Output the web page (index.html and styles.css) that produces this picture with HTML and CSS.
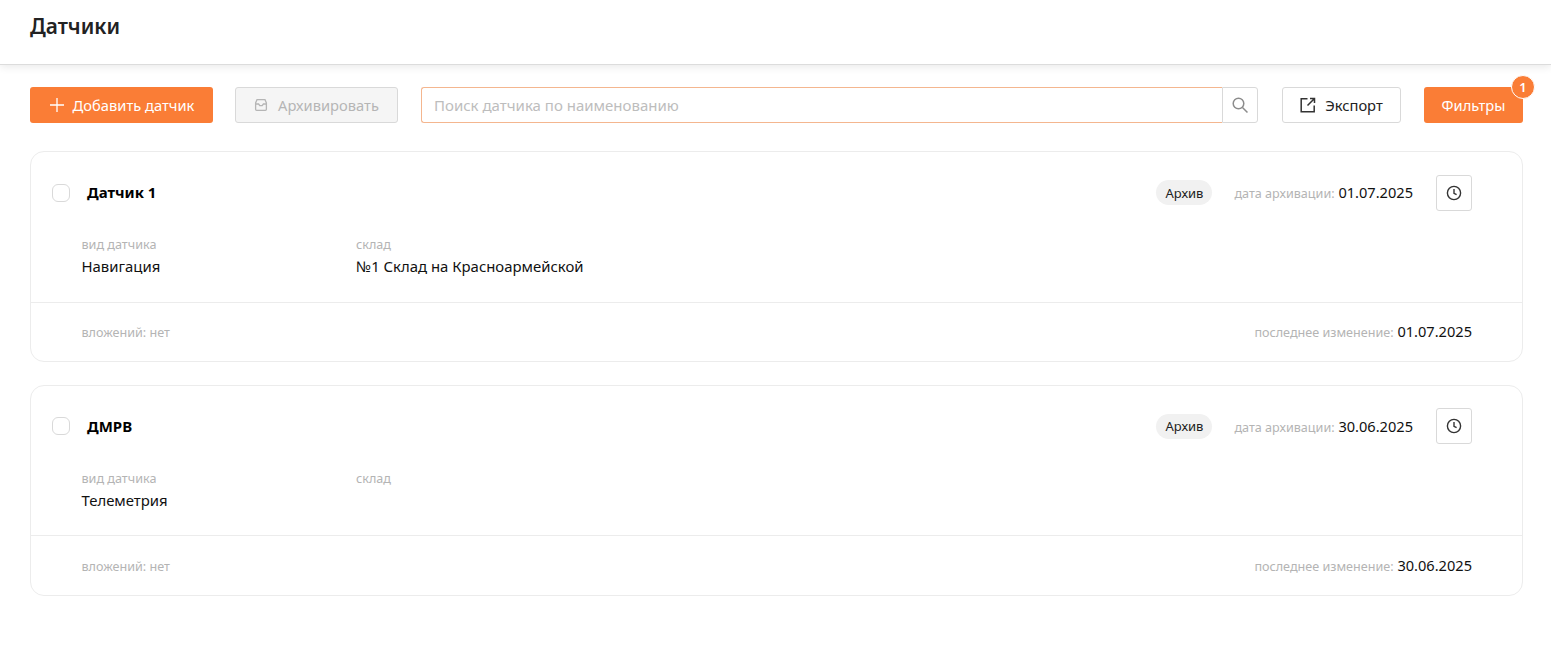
FILE: index.html
```html
<!DOCTYPE html>
<html lang="ru">
<head>
<meta charset="utf-8">
<title>Датчики</title>
<link rel="stylesheet" href="styles.css">
</head>
<body>
<header class="topbar"><h1 class="page-title">Датчики</h1></header>
<main class="content">
  <div class="toolbar">
    <button class="btn btn-primary btn-add">
      <svg class="ic" width="16" height="16" viewBox="0 0 16 16" fill="none" stroke="currentColor" stroke-width="1.3"><path d="M8 1v14M1 8h14"/></svg>
      Добавить датчик
    </button>
    <button class="btn btn-disabled btn-archive">
      <svg class="ic" width="14" height="14" viewBox="0 0 14 14" fill="none" stroke="currentColor" stroke-width="1.3"><path d="M3 1.7h8l1.4 3.3v6.3a1 1 0 0 1-1 1H2.6a1 1 0 0 1-1-1V5z"/><path d="M1.6 6h3l1.2 1.6h2.4L9.4 6h3"/></svg>
      Архивировать
    </button>
    <div class="search">
      <input class="search-input" type="text" placeholder="Поиск датчика по наименованию">
      <span class="search-btn">
        <svg width="18" height="18" viewBox="0 0 18 18" fill="none" stroke="#8c8c8c" stroke-width="1.5"><circle cx="7.5" cy="7.5" r="5.3"/><path d="M11.5 11.5l5 5"/></svg>
      </span>
    </div>
    <button class="btn btn-default btn-export">
      <svg class="ic" width="16" height="16" viewBox="0 0 16 16" fill="none" stroke="#333" stroke-width="1.5"><path d="M7.5 1.8H1.2v13h13V8.5"/><path d="M7.5 8.5L14 2M10 1.5h4.5V6"/></svg>
      Экспорт
    </button>
    <div class="filter-wrap">
      <button class="btn btn-primary btn-filter">Фильтры</button>
      <span class="badge">1</span>
    </div>
  </div>

  <section class="card">
    <div class="card-body">
      <div class="card-head">
        <span class="check"></span>
        <span class="card-title">Датчик 1</span>
        <span class="pill">Архив</span>
        <span class="meta"><span class="muted">дата архивации:</span> 01.07.2025</span>
        <span class="icon-btn">
          <svg width="16" height="16" viewBox="0 0 16 16" fill="none" stroke="#333" stroke-width="1.4"><circle cx="8" cy="8" r="6.6"/><path d="M8 4v4.3l2.6 1.4"/></svg>
        </span>
      </div>
      <div class="fields">
        <div class="field field-type"><div class="muted">вид датчика</div><div class="value">Навигация</div></div>
        <div class="field"><div class="muted">склад</div><div class="value">№1 Склад на Красноармейской</div></div>
      </div>
    </div>
    <div class="card-foot">
      <span class="muted">вложений: нет</span>
      <span class="meta"><span class="muted">последнее изменение:</span> 01.07.2025</span>
    </div>
  </section>

  <section class="card">
    <div class="card-body">
      <div class="card-head">
        <span class="check"></span>
        <span class="card-title">ДМРВ</span>
        <span class="pill">Архив</span>
        <span class="meta"><span class="muted">дата архивации:</span> 30.06.2025</span>
        <span class="icon-btn">
          <svg width="16" height="16" viewBox="0 0 16 16" fill="none" stroke="#333" stroke-width="1.4"><circle cx="8" cy="8" r="6.6"/><path d="M8 4v4.3l2.6 1.4"/></svg>
        </span>
      </div>
      <div class="fields">
        <div class="field field-type"><div class="muted">вид датчика</div><div class="value">Телеметрия</div></div>
        <div class="field"><div class="muted">склад</div><div class="value"></div></div>
      </div>
    </div>
    <div class="card-foot">
      <span class="muted">вложений: нет</span>
      <span class="meta"><span class="muted">последнее изменение:</span> 30.06.2025</span>
    </div>
  </section>
</main>
</body>
</html>
```
FILE: styles.css
```css
* { box-sizing: border-box; }
html, body { margin: 0; padding: 0; }
body {
  background: #fff;
  font-family: "Noto Sans", "Open Sans", sans-serif;
  color: #111;
  font-size: 14px;
  overflow: hidden;
}
.topbar {
  height: 65px;
  padding: 11px 30px 0;
  border-bottom: 1px solid #dcdcdc;
  box-shadow: 0 2px 8px rgba(0, 0, 0, .09);
}
.page-title {
  margin: 0;
  font-size: 20.8px;
  line-height: 30px;
  font-weight: 600;
  color: #222;
}
.content { padding: 22px 28px 0 30px; }
.toolbar { display: flex; align-items: stretch; height: 36px; }
.btn {
  display: inline-flex;
  align-items: center;
  justify-content: center;
  height: 36px;
  border-radius: 3px;
  border: 1px solid transparent;
  font: inherit;
  font-size: 14.7px;
  padding: 0;
}
.btn-primary { background: #fa7d36; color: #fff; }
.btn-disabled { background: #f5f5f5; border-color: #d9d9d9; color: #b5b5b5; }
.btn-default { background: #fff; border-color: #d9d9d9; color: #222; }
.btn-add { width: 183px; gap: 8px; }
.btn-archive { width: 163px; margin-left: 22px; gap: 10px; }
.btn-export { width: 119px; margin-left: 24px; gap: 9px; }
.btn-filter { width: 99px; }
.search { display: flex; width: 837px; margin-left: 23px; }
.search-input {
  flex: 1;
  min-width: 0;
  height: 36px;
  border: 1px solid #f4b68f;
  border-right: 0;
  border-radius: 3px 0 0 3px;
  padding: 0 12px;
  font: inherit;
  font-size: 15px;
  outline: none;
  color: #222;
}
.search-input::placeholder { color: #bdbdbd; opacity: 1; }
.search-btn {
  width: 36px;
  display: flex;
  align-items: center;
  justify-content: center;
  border: 1px solid #d9d9d9;
  border-radius: 0 3px 3px 0;
}
.filter-wrap { position: relative; margin-left: 23px; }
.badge {
  position: absolute;
  top: -12px;
  right: -12px;
  width: 24px;
  height: 24px;
  border-radius: 50%;
  border: 1px solid #fff;
  background: #fa7d36;
  color: #fff;
  font-size: 13px;
  font-weight: 600;
  display: flex;
  align-items: center;
  justify-content: center;
}
.card {
  margin-top: 28px;
  height: 210.9px;
  border: 1px solid #ececec;
  border-radius: 14px;
  display: flex;
  flex-direction: column;
}
.card + .card { margin-top: 22.8px; }
.card-body { height: 150.7px; padding: 22.6px 50px 0 21px; border-bottom: 1px solid #ececec; }
.card-head { display: flex; align-items: center; height: 36px; }
.check {
  width: 18px;
  height: 18px;
  border: 1px solid #d9d9d9;
  border-radius: 6px;
}
.card-title {
  margin-left: 17px;
  margin-bottom: 0.6px;
  font-weight: 700;
  font-size: 15px;
  color: #000;
  margin-right: auto;
}
.pill {
  background: #f1f1f1;
  border-radius: 13px;
  height: 25px;
  width: 56px;
  display: flex;
  align-items: center;
  justify-content: center;
  font-size: 13px;
  color: #222;
}
.meta { font-size: 14.6px; color: #111; }
.card-head .meta { margin-left: 22px; margin-bottom: 0.6px; }
.muted { color: #b4b4b4; font-size: 12.6px; line-height: 17px; }
.icon-btn {
  width: 36px;
  height: 36px;
  margin-left: 23px;
  border: 1px solid #d9d9d9;
  border-radius: 3px;
  display: flex;
  align-items: center;
  justify-content: center;
}
.fields { display: flex; margin-top: 25.5px; padding-left: 29.5px; }
.field-type { width: 274.5px; }
.value { font-size: 14.9px; line-height: 20px; margin-top: 3px; color: #111; }
.card-foot {
  flex: 1;
  display: flex;
  align-items: baseline;
  justify-content: space-between;
  padding: 18.6px 50px 0 50.5px;
}
```
